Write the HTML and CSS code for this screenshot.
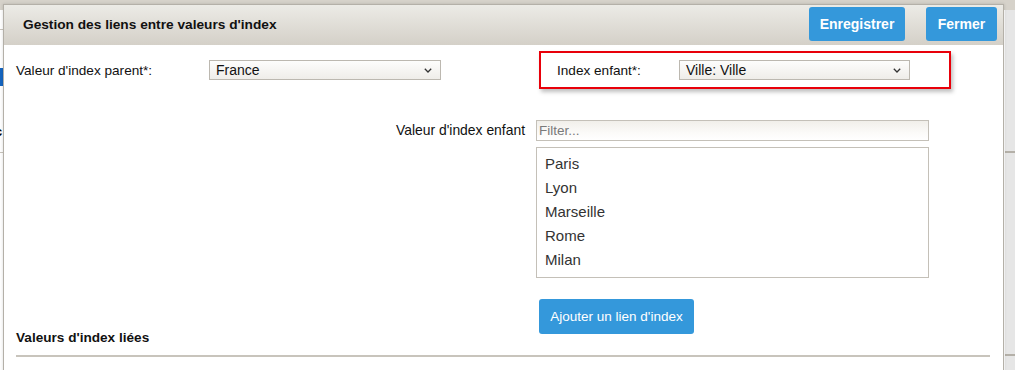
FILE: index.html
```html
<!DOCTYPE html>
<html lang="fr">
<head>
<meta charset="utf-8">
<title>Gestion des liens entre valeurs d'index</title>
<link rel="stylesheet" href="styles.css">
</head>
<body>
<div class="page">
  <div class="page-top"></div>
  <div class="page-left">
    <div class="pl-line pl-l1"></div>
    <div class="pl-blue"></div>
    <div class="pl-char">c</div>
    <div class="pl-line pl-l2"></div>
  </div>
  <div class="page-right">
    <div class="pr-line pr-l1"></div>
    <div class="pr-line pr-l2"></div>
  </div>
</div>

<div class="modal">
  <div class="modal-header">
    <h1 class="modal-title">Gestion des liens entre valeurs d'index</h1>
    <div class="header-actions">
      <button class="btn btn-bold btn-save">Enregistrer</button>
      <button class="btn btn-bold btn-close">Fermer</button>
    </div>
  </div>
  <div class="modal-body">
    <div class="row-top">
      <div class="field-parent">
        <label class="lbl lbl-parent">Valeur d'index parent*:</label>
        <div class="select select-parent">
          <span>France</span>
          <svg class="chev" width="8" height="5" viewBox="0 0 8 5"><polyline points="0.8,0.8 4,4 7.2,0.8" fill="none" stroke="#333" stroke-width="1.3"/></svg>
        </div>
      </div>
      <div class="field-child">
        <label class="lbl lbl-child">Index enfant*:</label>
        <div class="select select-child">
          <span>Ville: Ville</span>
          <svg class="chev" width="8" height="5" viewBox="0 0 8 5"><polyline points="0.8,0.8 4,4 7.2,0.8" fill="none" stroke="#333" stroke-width="1.3"/></svg>
        </div>
      </div>
    </div>

    <div class="child-grid">
      <label class="lbl-value">Valeur d'index enfant</label>
      <div class="value-col">
        <div class="filter"><span class="placeholder">Filter...</span></div>
        <div class="listbox">
          <div class="item">Paris</div>
          <div class="item">Lyon</div>
          <div class="item">Marseille</div>
          <div class="item">Rome</div>
          <div class="item">Milan</div>
          <div class="item">Florence</div>
        </div>
        <button class="btn btn-add">Ajouter un lien d'index</button>
      </div>
    </div>

    <h2 class="section-title">Valeurs d'index liées</h2>
    <div class="section-rule"></div>
  </div>
</div>
</body>
</html>
```

FILE: styles.css
```css
* { box-sizing: border-box; }
html, body {
  margin: 0;
  padding: 0;
}
body {
  width: 1015px;
  height: 370px;
  overflow: hidden;
  position: relative;
  background: #ffffff;
  font-family: "Liberation Sans", Arial, sans-serif;
  color: #000;
}

/* background page behind the modal */
.page {
  width: 1015px;
  height: 370px;
  position: relative;
}
.page-top {
  height: 10px;
  background: #d6d2ca;
}
.page-left {
  position: absolute;
  left: 0;
  top: 10px;
  width: 3px;
  height: 360px;
  background: #ffffff;
}
.pl-line {
  position: absolute;
  left: 0;
  width: 3px;
  height: 1px;
  background: #c8c4bc;
}
.pl-l1 { top: 19px; }
.pl-l2 { top: 142px; }
.pl-blue {
  position: absolute;
  left: 0;
  top: 58px;
  width: 3px;
  height: 18px;
  background: #1565c0;
}
.pl-char {
  position: absolute;
  left: -5px;
  top: 114px;
  font: bold 13px "Liberation Sans", Arial, sans-serif;
}
.page-right {
  position: absolute;
  right: 0;
  top: 10px;
  width: 11px;
  height: 360px;
  background: #e6e6e6;
  border-left: 1px solid #ffffff;
}
.pr-line {
  position: absolute;
  left: 0;
  width: 11px;
  height: 2px;
  background: #b4b0a8;
}
.pr-l1 { top: 141px; }
.pr-l2 { top: 344px; }

/* modal */
.modal {
  position: absolute;
  left: 3px;
  top: 4px;
  width: 1001px;
  height: 380px;
  background: #ffffff;
  border: 1px solid #b4b0a8;
  box-shadow: 0 0 3px rgba(0,0,0,0.15);
}
.modal-header {
  height: 40px;
  display: flex;
  align-items: flex-start;
  justify-content: space-between;
  background: linear-gradient(#ecebe6, #d4d0c8);
  padding: 2px 6px 0 19px;
}
.modal-title {
  margin: 0;
  font-size: 13.7px;
  font-weight: bold;
  line-height: 36px;
  color: #111;
}
.header-actions {
  display: flex;
  gap: 21px;
}
.btn {
  border: none;
  background: #3498db;
  color: #ffffff;
  border-radius: 3px;
  font-family: "Liberation Sans", Arial, sans-serif;
  padding: 0;
  cursor: pointer;
  white-space: nowrap;
}
.btn-bold {
  font-weight: bold;
  font-size: 14px;
  height: 34px;
}
.btn-save { width: 96px; }
.btn-close { width: 71px; }

.modal-body {
  padding: 6px 13px 0 12px;
}
.row-top {
  display: flex;
  align-items: center;
}
.field-parent {
  display: flex;
  align-items: center;
}
.lbl {
  font-size: 13.6px;
  color: #111;
}
.lbl-parent { width: 193px; }
.lbl-child { width: 122px; }
.select {
  height: 20px;
  border: 1px solid #bcb8b0;
  background: linear-gradient(#fdfdfc, #efede9);
  display: flex;
  align-items: center;
  justify-content: space-between;
  padding: 0 8px 0 6px;
  font-size: 14px;
  color: #111;
}
.select-parent { width: 232px; }
.select-child { width: 231px; }
.chev { display: block; }

.field-child {
  margin-left: 98px;
  width: 412px;
  height: 38px;
  border: 2px solid #e8000a;
  box-shadow: 2px 3px 4px rgba(0,0,0,0.25);
  display: flex;
  align-items: center;
  padding-left: 16px;
}

.child-grid {
  display: grid;
  grid-template-columns: 509px 393px;
  column-gap: 11px;
  margin-top: 31px;
}
.lbl-value {
  text-align: right;
  font-size: 13.9px;
  color: #111;
  line-height: 21px;
}
.value-col {
  display: flex;
  flex-direction: column;
  align-items: flex-start;
}
.filter {
  width: 393px;
  height: 21px;
  border: 1px solid #c4c0b8;
  background: linear-gradient(#f1efea, #fbfaf8 60%, #ffffff);
  padding-left: 2px;
  display: flex;
  align-items: center;
}
.placeholder {
  font-size: 13.5px;
  color: #7a7a7a;
}
.listbox {
  margin-top: 6px;
  width: 393px;
  height: 131px;
  border: 1px solid #c4c0b8;
  overflow: hidden;
  padding: 4px 0 0 8px;
}
.item {
  font-size: 15px;
  line-height: 24px;
  color: #333;
}
.btn-add {
  margin-top: 21px;
  margin-left: 3px;
  width: 155px;
  height: 35px;
  font-size: 13.5px;
}

.section-title {
  margin: -4px 0 0 0;
  font-size: 13.6px;
  font-weight: bold;
  color: #111;
  line-height: 16px;
}
.section-rule {
  margin-top: 9px;
  width: 974px;
  height: 2px;
  background: #c8c4bc;
}
```
